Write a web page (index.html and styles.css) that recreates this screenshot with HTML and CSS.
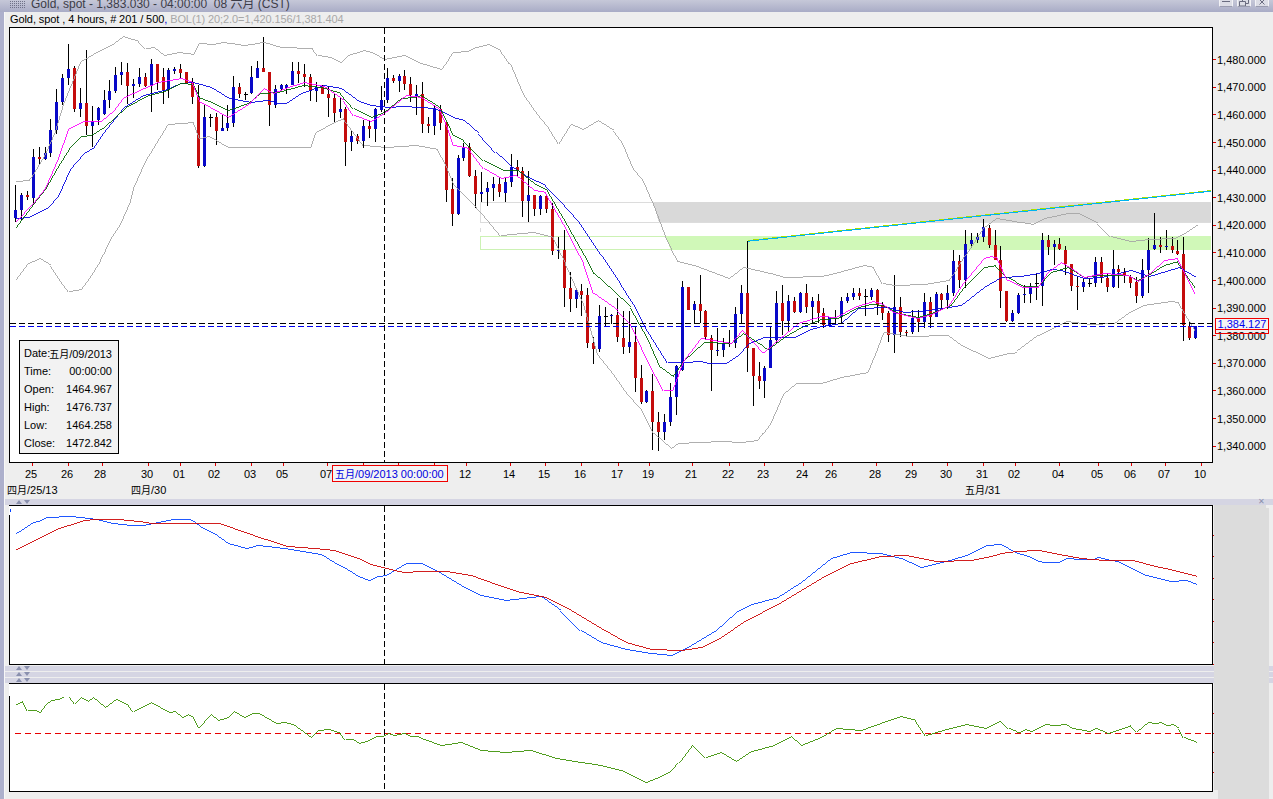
FILE: index.html
```html
<!DOCTYPE html>
<html lang="zh">
<head>
<meta charset="utf-8">
<title>Gold, spot</title>
<link rel="stylesheet" href="styles.css">
</head>
<body>
<div class="window">
  <header class="titlebar">
    <svg class="appicon" width="16" height="8" viewBox="0 0 16 8"><path class="appdots" d="M0 1.5H16M0 3.5H16M0 5.5H16M0 7.5H16"/></svg>
    <span class="titletext">Gold, spot - 1,383.030 - 04:00:00&nbsp; 08 六月 (CST)</span>
    <div class="winbtns">
      <span class="winbtn"><svg width="14" height="7" viewBox="0 0 14 7"><path class="winglyph" d="M3 2.5H11"/></svg></span>
      <span class="winbtn"><svg width="14" height="7" viewBox="0 0 14 7"><path class="winglyph" d="M5.5 2.5V0.5H11.5V4.5H9M2.5 2.5H8.5V7H2.5Z"/></svg></span>
      <span class="winbtn"><svg width="14" height="7" viewBox="0 0 14 7"><path class="winglyph" d="M3 0L8 5M3 5L8 0" transform="translate(1.5 0.5)"/></svg></span>
    </div>
  </header>
  <div class="main">
    <div class="edge"></div>
    <div class="content">
      <div class="legend"><span>Gold, spot , 4 hours, # 201 / 500</span><span class="legendcomma">,</span><span class="legendbol">&nbsp;BOL(1) 20;2.0=1,420.156/1,381.404</span></div>
      <div class="chartrow">
        <div class="plotwrap">
          <svg class="plot" width="1204" height="436" viewBox="9 27 1204 436">
            <rect class="bg" x="9.5" y="27.5" width="1203" height="435"/>
            <polygon class="bandgray" points="653,202 1211,202 1211,223 659,223"/>
            <polygon class="bandgreen" points="665,236 1211,236 1211,250 671,250"/>
            <path class="outlinegray" d="M653 202.5H480.5V222.5H1211M480.5 228V232"/>
            <path class="outlinegreen" d="M665 236.5H480.5V249.5H671"/>
            <path class="wicks" d="M15.5 185V222M21.5 193V220M27.5 191V200M33.5 149V205M39.5 147V164M45.5 147V160M50.5 119V157M56.5 89V134M62.5 74V105M68.5 44V85M74.5 66V112M80.5 88V117M86.5 50V135M92.5 106V147M98.5 107V125M104.5 90V115M109.5 80V108M115.5 67V93M121.5 62V85M127.5 63V104M133.5 79V98M139.5 68V87M145.5 73V87M151.5 59V112M157.5 64V90M163.5 68V104M168.5 68V98M174.5 67V74M180.5 64V78M186.5 72V83M192.5 78V104M198.5 85V168M204.5 105V167M210.5 114V127M216.5 113V145M222.5 115V130M227.5 105V131M233.5 76V127M239.5 83V98M245.5 92V100M251.5 66V94M257.5 61V78M263.5 37V72M269.5 72V126M275.5 85V108M281.5 84V90M286.5 84V94M292.5 62V85M298.5 62V83M304.5 64V87M310.5 74V101M316.5 82V102M322.5 85V94M328.5 86V117M334.5 94V122M340.5 98V118M345.5 107V166M351.5 131V151M357.5 134V144M363.5 120V148M369.5 121V138M375.5 108V142M381.5 86V112M387.5 68V103M393.5 75V83M399.5 74V92M404.5 70V90M410.5 77V102M416.5 85V115M422.5 82V133M428.5 117V133M434.5 105V135M440.5 105V130M446.5 122V202M452.5 178V226M458.5 155V215M463.5 143V161M469.5 143V177M475.5 170V208M481.5 172V202M487.5 182V206M493.5 177V201M499.5 177V197M505.5 178V202M511.5 154V187M517.5 160V176M522.5 167V217M528.5 171V222M534.5 195V216M540.5 195V215M546.5 195V213M552.5 203V255M558.5 237V259M564.5 230V307M570.5 272V312M576.5 288V308M581.5 284V316M587.5 288V348M593.5 337V364M599.5 305V352M605.5 307V327M611.5 314V324M617.5 298V342M623.5 311V354M629.5 311V353M635.5 327V392M641.5 365V404M646.5 390V403M652.5 374V450M658.5 412V451M664.5 414V440M670.5 383V426M676.5 365V415M682.5 281V371M688.5 287V310M694.5 301V323M700.5 275V323M705.5 310V340M711.5 335V391M717.5 328V356M723.5 338V357M729.5 330V347M735.5 307V348M741.5 285V323M747.5 241V372M753.5 348V406M759.5 362V389M764.5 366V398M770.5 326V368M776.5 291V343M782.5 285V335M788.5 295V331M794.5 297V313M800.5 292V313M806.5 284V313M812.5 297V323M818.5 294V323M823.5 308V328M829.5 317V327M835.5 310V325M841.5 297V323M847.5 293V303M853.5 288V300M859.5 288V300M865.5 289V316M871.5 288V300M877.5 289V315M882.5 302V320M888.5 311V342M894.5 275V353M900.5 297V337M906.5 330V336M912.5 310V334M918.5 310V332M924.5 293V328M930.5 297V328M936.5 292V317M941.5 293V310M947.5 285V309M953.5 250V296M959.5 255V288M965.5 230V288M971.5 233V248M977.5 233V243M983.5 219V242M989.5 225V248M995.5 230V260M1000.5 246V308M1006.5 291V322M1012.5 310V322M1018.5 293V314M1024.5 285V303M1030.5 283V303M1036.5 273V300M1042.5 233V306M1048.5 235V255M1054.5 240V265M1059.5 238V250M1065.5 246V275M1071.5 264V291M1077.5 276V310M1083.5 278V292M1089.5 278V287M1095.5 257V287M1101.5 257V283M1107.5 273V292M1113.5 250V288M1118.5 265V288M1124.5 268V283M1130.5 275V288M1136.5 277V303M1142.5 259V298M1148.5 238V293M1154.5 213V250M1160.5 237V253M1166.5 230V250M1172.5 237V253M1177.5 240V255M1183.5 237V341M1189.5 322V340M1195.5 326V339"/>
            <path class="doji" d="M208.5 117.5h4M243.5 94.5h4M727.5 343.5h4M603.5 316.5h4M863.5 296.5h4M1034.5 283.5h4M1087.5 283.5h4"/>
            <path class="bodyblue" d="M15.5 210V218M21.5 195V210M33.5 157V198M45.5 153V159M50.5 130V153M56.5 102V130M62.5 78V102M68.5 69V78M80.5 103V109M92.5 121V126M98.5 108V120M104.5 100V114M109.5 91V100M115.5 75V91M121.5 72V75M133.5 84V86M139.5 77V84M151.5 64V86M168.5 70V90M174.5 69V71M204.5 117V166M222.5 128V131M227.5 123V128M233.5 87V123M251.5 77V93M257.5 68V78M275.5 89V105M281.5 85V89M286.5 85V88M292.5 71V85M316.5 87V91M340.5 109V112M351.5 136V142M363.5 126V141M375.5 109V129M381.5 100V110M387.5 78V100M399.5 76V81M416.5 94V96M434.5 109V126M458.5 158V214M463.5 147V158M481.5 192V194M487.5 188V192M493.5 184V188M505.5 182V193M511.5 167V182M528.5 195V201M540.5 196V209M558.5 250V251M576.5 290V299M599.5 316V349M611.5 315V316M629.5 342V347M646.5 391V402M664.5 422V432M670.5 397V422M676.5 366V397M682.5 287V370M694.5 304V310M717.5 350V351M723.5 343V350M735.5 314V343M741.5 293V314M764.5 368V381M770.5 340V368M776.5 303V340M788.5 301V321M800.5 293V312M812.5 301V307M829.5 317V326M835.5 318V319M841.5 301V317M847.5 297V301M853.5 293V297M871.5 290V297M894.5 307V335M912.5 318V332M924.5 302V322M936.5 294V317M947.5 293V300M953.5 261V293M965.5 244V280M971.5 240V244M977.5 237V240M983.5 227V237M1012.5 313V321M1018.5 295V313M1024.5 294V295M1030.5 286V294M1042.5 240V286M1054.5 244V247M1083.5 282V287M1095.5 262V283M1113.5 269V287M1142.5 270V296M1148.5 250V270M1154.5 245V249M1166.5 246V247M1195.5 326V338"/>
            <path class="bodyred" d="M27.5 195V197M39.5 157V159M74.5 68V109M86.5 103V126M127.5 72V86M145.5 77V86M157.5 64V82M163.5 77V90M180.5 69V73M186.5 72V83M192.5 82V97M198.5 97V166M216.5 117V131M239.5 87V94M263.5 68V72M269.5 72V105M298.5 71V74M304.5 74V77M310.5 77V91M322.5 87V94M328.5 94V98M334.5 98V113M345.5 109V142M357.5 136V141M369.5 126V129M393.5 78V81M404.5 76V84M410.5 84V95M422.5 94V124M428.5 124V126M440.5 109V123M446.5 122V190M452.5 189V214M469.5 147V176M475.5 176V194M499.5 184V192M517.5 167V171M522.5 171V201M534.5 195V209M546.5 196V209M552.5 209V251M564.5 250V288M570.5 288V299M581.5 291V295M587.5 295V343M593.5 343V349M617.5 315V337M623.5 338V347M635.5 342V378M641.5 378V402M652.5 391V422M658.5 422V432M688.5 287V310M700.5 304V311M705.5 311V337M711.5 338V350M747.5 293V348M753.5 348V376M759.5 376V381M782.5 303V321M794.5 301V312M806.5 293V307M818.5 301V313M823.5 313V325M859.5 293V296M877.5 290V305M882.5 305V313M888.5 313V335M900.5 307V332M906.5 332V333M918.5 318V322M930.5 302V317M941.5 294V300M959.5 261V280M989.5 228V245M995.5 245V260M1000.5 260V291M1006.5 291V321M1048.5 240V247M1059.5 244V249M1065.5 250V264M1071.5 264V286M1077.5 286V287M1101.5 262V277M1107.5 278V287M1118.5 269V272M1124.5 272V275M1130.5 277V283M1136.5 282V296M1160.5 245V247M1172.5 246V250M1177.5 251V254M1183.5 254V325M1189.5 326V338"/>
            <polyline class="bb" points="15,181 28,180 33,173 45,153 55,130 63,103 80,61 87,57 97,51 110,45 122,36 138,41 145,48 153,47 163,55 178,52 193,54 198,43 212,44 222,42 230,43 243,45 263,42 280,47 312,48 317,55 330,57 340,62 347,55 363,50 373,53 383,59 403,55 420,63 440,69 445,63 452,52 466,51 475,47 487,44 500,50 512,67 523,93 537,113 547,125 558,143 570,124 582,129 597,120 613,130 622,142 633,168 642,178 653,203 665,235 677,261 693,265 728,278 742,267 770,273 783,277 820,276 830,274 863,265 873,267 882,283 893,285 923,284 948,280 957,267 970,247 983,227 995,218 1020,222 1032,224 1043,218 1067,213 1078,213 1097,223 1110,236 1130,241 1148,239 1173,238 1185,232 1197,224"/>
            <polyline class="bb" points="15,279 27,263 39,258 50,265 62,283 68,291 80,289 87,280 100,260 110,238 120,223 130,200 133,187 145,160 167,124 193,122 199,138 208,136 227,147 310,147 315,132 333,122 343,118 363,145 385,147 415,145 437,149 445,163 453,183 470,200 482,213 500,235 533,232 553,237 565,263 583,303 597,353 613,373 627,393 640,407 653,433 670,448 677,443 720,441 740,442 757,440 770,423 783,393 795,383 820,383 840,377 867,372 875,353 883,332 907,336 947,335 960,345 988,358 1007,353 1013,353 1037,335 1065,321 1090,324 1113,323 1127,313 1142,305 1170,301 1178,302 1195,330"/>
            <polyline class="mablue" points="15,218 28,217 47,207 58,195 70,168 83,153 93,147 103,132 123,107 142,95 163,90 180,83 192,82 210,87 228,98 250,102 267,100 277,103 285,103 300,93 323,85 340,88 358,101 370,105 388,107 400,106 420,107 433,108 443,112 452,117 463,120 478,133 495,152 512,167 527,177 545,185 560,200 578,220 600,253 620,283 633,303 647,330 667,362 683,362 700,361 707,363 725,363 737,355 748,343 763,337 793,337 807,330 820,326 840,323 857,308 887,307 903,312 927,310 960,305 983,287 1000,277 1020,276 1037,273 1050,269 1060,270 1083,278 1100,277 1130,270 1148,276 1178,267 1195,277"/>
            <polyline class="magreen" points="15,227 33,203 45,188 57,167 70,146 80,136 90,135 103,127 125,107 147,95 163,91 180,83 193,84 200,98 213,103 227,110 247,103 260,93 277,92 302,85 320,87 340,93 353,108 370,117 383,112 400,98 413,97 420,95 440,108 448,123 453,135 463,140 483,160 503,170 517,170 533,183 547,190 563,217 580,247 593,273 612,290 630,307 647,337 660,367 672,376 683,360 703,342 730,343 742,333 753,340 767,349 783,337 800,327 820,319 837,318 857,307 870,304 882,305 897,313 917,317 930,313 950,305 963,287 983,267 995,265 1007,277 1023,286 1037,286 1050,272 1067,267 1083,277 1097,275 1127,275 1137,280 1150,273 1163,265 1177,261 1195,287"/>
            <polyline class="mamagenta" points="15,221 33,202 45,187 58,157 68,128 83,121 100,121 113,110 123,97 143,88 157,82 180,78 192,82 200,102 227,117 250,102 263,88 272,93 287,87 303,82 323,86 343,100 353,115 370,121 383,113 405,95 420,97 440,110 447,127 453,145 468,148 483,168 500,178 515,175 533,190 545,192 563,223 583,263 593,293 617,310 630,323 647,360 663,390 672,390 683,360 700,338 730,343 742,329 763,352 773,343 797,323 820,316 835,317 853,307 872,301 882,304 892,312 917,318 933,313 948,305 963,282 983,258 990,256 997,258 1007,280 1023,287 1037,287 1047,272 1060,262 1070,268 1083,277 1103,273 1127,275 1137,281 1150,272 1163,260 1177,258 1195,293"/>
            <path class="trendlime" d="M748 240.6L1211 190.6"/>
            <path class="trendcyan" d="M748 241.2L1211 191.2"/>
            <path class="dashblack" d="M10 323.5H1212"/>
            <path class="dashblue" d="M10 326.5H1212"/>
            <path class="dashblack" d="M384.5 28V462"/>
          </svg>
          <dl class="info">
            <dt>Date:</dt><dd><span class="cjk">五月</span>/09/2013</dd>
            <dt>Time:</dt><dd>00:00:00</dd>
            <dt>Open:</dt><dd>1464.967</dd>
            <dt>High:</dt><dd>1476.737</dd>
            <dt>Low:</dt><dd>1464.258</dd>
            <dt>Close:</dt><dd>1472.842</dd>
          </dl>
        </div>
        <div class="yaxis">
          <div class="ylabel">1,480.000</div>
          <div class="ylabel">1,470.000</div>
          <div class="ylabel">1,460.000</div>
          <div class="ylabel">1,450.000</div>
          <div class="ylabel">1,440.000</div>
          <div class="ylabel">1,430.000</div>
          <div class="ylabel">1,420.000</div>
          <div class="ylabel">1,410.000</div>
          <div class="ylabel">1,400.000</div>
          <div class="ylabel">1,390.000</div>
          <div class="ylabel">1,380.000</div>
          <div class="ylabel">1,370.000</div>
          <div class="ylabel">1,360.000</div>
          <div class="ylabel">1,350.000</div>
          <div class="ylabel">1,340.000</div>
          <div class="pricetag">1,384.127</div>
        </div>
      </div>
      <svg class="xaxis" width="1204" height="36" viewBox="9 463 1204 36">
        <path class="xticks" d="M32.5 463V466M68.5 463V466M102.5 463V466M148.5 463V466M180.5 463V466M215.5 463V466M251.5 463V466M283.5 463V466M327.5 463V466M363.5 463V466M398.5 463V466M434.5 463V466M466.5 463V466M510.5 463V466M545.5 463V466M581.5 463V466M618.5 463V466M649.5 463V466M692.5 463V466M729.5 463V466M764.5 463V466M803.5 463V466M832.5 463V466M876.5 463V466M912.5 463V466M947.5 463V466M983.5 463V466M1015.5 463V466M1059.5 463V466M1098.5 463V466M1131.5 463V466M1165.5 463V466M1201.5 463V466"/>
        <g class="xlabels">
          <text x="31" y="478">25</text><text x="67" y="478">26</text><text x="100" y="478">28</text><text x="147" y="478">30</text><text x="179" y="478">01</text><text x="214" y="478">02</text><text x="250" y="478">03</text><text x="282" y="478">05</text><text x="326" y="478">07</text><text x="465" y="478">12</text><text x="509" y="478">14</text><text x="544" y="478">15</text><text x="580" y="478">16</text><text x="617" y="478">17</text><text x="648" y="478">19</text><text x="691" y="478">21</text><text x="728" y="478">22</text><text x="763" y="478">23</text><text x="802" y="478">24</text><text x="831" y="478">26</text><text x="875" y="478">28</text><text x="911" y="478">29</text><text x="946" y="478">30</text><text x="982" y="478">31</text><text x="1014" y="478">02</text><text x="1058" y="478">04</text><text x="1097" y="478">05</text><text x="1130" y="478">06</text><text x="1164" y="478">07</text><text x="1200" y="478">10</text>
        </g>
        <rect class="cursorbox" x="332.5" y="465.5" width="115" height="16"/>
        <text class="cursortext" x="335" y="478"><tspan class="cjk">五月</tspan>/09/2013 00:00:00</text>
        <g class="xdates">
          <text x="7" y="494"><tspan class="cjk">四月</tspan>/25/13</text><text x="131" y="494"><tspan class="cjk">四月</tspan>/30</text><text x="965" y="494"><tspan class="cjk">五月</tspan>/31</text>
        </g>
      </svg>
      <div class="sash"><i class="tri up"></i><i class="tri down"></i></div>
      <svg class="plot" width="1205" height="160" viewBox="9 505 1205 160">
        <rect class="bg" x="9.5" y="505.5" width="1203" height="159"/>
        <path class="gapwhite" d="M9.5 506V515"/>
        <path class="markblue" d="M10.5 509V512"/>
        <path class="rticks" d="M1213 535.5h1M1213 556.5h1M1213 578.5h1M1213 599.5h1M1213 621.5h1M1213 642.5h1M1213 664.5h1"/>
        <polyline class="sigblue" points="15,533 23,528 32,522 40,520 45,517 70,516 88,518 100,520 112,523 130,525 142,525 157,522 172,519 188,519 193,521 200,527 213,533 227,543 245,548 257,545 283,548 320,554 333,562 343,567 357,576 368,580 377,576 385,575 405,563 420,563 435,570 460,585 480,595 505,600 540,596 560,610 580,630 600,642 625,649 650,653 670,655 690,645 715,630 735,612 750,604 775,598 800,582 830,558 850,552 880,553 900,558 920,567 945,561 965,555 985,545 1000,544 1012,551 1028,556 1037,561 1045,562 1057,562 1065,558 1080,559 1092,559 1097,557 1110,560 1117,561 1127,566 1142,574 1153,577 1170,581 1185,580 1196,584"/>
        <polyline class="sigred" points="15,549 33,540 55,529 83,520 93,519 117,519 138,521 150,523 207,523 218,523 247,533 287,546 313,548 333,550 360,559 370,564 393,570 403,572 420,571 445,571 470,575 495,584 520,592 545,597 570,610 600,628 625,642 650,649 680,650 700,647 720,637 745,620 775,605 800,590 825,575 850,563 880,556 905,555 935,561 970,560 990,556 1000,553 1015,551 1038,550 1058,554 1080,558 1103,560 1132,560 1150,565 1173,570 1196,576"/>
        <path class="dashblack" d="M384.5 506V664"/>
      </svg>
      <div class="sashes">
        <div class="sash thin"><i class="tri up"></i><i class="tri down"></i></div>
        <div class="sash thin"><i class="tri up"></i><i class="tri down"></i></div>
        <div class="sash thin"><i class="tri up"></i><i class="tri down"></i></div>
      </div>
      <svg class="plot" width="1205" height="109" viewBox="9 683 1205 109">
        <rect class="bg" x="9.5" y="683.5" width="1203" height="108"/>
        <path class="gapwhite" d="M9.5 684V696"/>
        <path class="rticks" d="M1213 713.5h1M1213 733.5h1M1213 752.5h1M1213 772.5h1"/>
        <path class="dashred" d="M15 733.5H1212"/>
        <polyline class="rsi" points="15,704 22,701 27,710 35,710 39,712 45,704 50,700 57,699 63,696"/>
        <polyline class="rsi" points="69,696 74,703 80,697 87,701 92,697 104,707 115,699 128,705 133,711 150,702 168,712 174,711 181,717 187,714 193,717 198,727 210,714 217,720 227,717 233,711 243,717 252,713 258,713 275,723 283,722 292,724 310,737 317,730 328,729 340,733 345,739 352,739 358,743 365,741 375,736 382,736 387,733 393,735 403,733 410,736 417,736 420,738 440,745 460,742 480,750 505,752 530,750 555,758 580,762 600,765 620,770 645,782 655,778 670,771 680,760 692,744 705,757 720,752 735,761 750,751 770,746 790,736 800,745 820,737 835,728 860,730 885,721 900,716 915,720 925,735 945,729 965,724 985,728 1000,720 1008,728 1018,732 1024,729 1030,731 1045,724 1053,725 1065,724 1071,728 1078,729 1088,731 1095,728 1107,733 1122,728 1130,725 1136,731 1147,722 1155,723 1159,722 1166,725 1172,724 1178,728 1183,737 1196,742"/>
        <path class="dashblack" d="M384.5 684V791"/>
      </svg>
    </div>
    <div class="rail"></div>
    <span class="sashclose">✕</span>
  </div>
</div>
</body>
</html>
```
FILE: styles.css
```css
* { box-sizing: border-box; }
html, body { margin: 0; padding: 0; }
body { font-family: "Liberation Sans", "Noto Sans CJK SC", sans-serif; font-size: 11px; color: #000; background: #eee; }
.window { width: 1273px; height: 799px; overflow: hidden; display: flex; flex-direction: column; background: #eee; position: relative; }
.cjk { font-size: 10px; }

.titlebar { height: 12px; flex: none; display: flex; align-items: flex-start; padding-left: 10px; background: linear-gradient(#c6c8d8, #a9acc6); overflow: hidden; }
.appicon { flex: none; }
.appdots { stroke: #6f7288; stroke-width: 1; stroke-dasharray: 1 1; fill: none; }
.titletext { margin-left: 5px; font-size: 12px; line-height: 8px; color: #3c3c48; white-space: nowrap; flex: 1; }
.winbtns { display: flex; gap: 4px; padding-right: 4px; flex: none; }
.winbtn { width: 14px; height: 7px; background: #dcdde6; border: 1px solid #f2f2f6; border-top: 0; border-bottom-color: #9a9cb0; display: block; overflow: hidden; }
.winbtn svg { display: block; margin: -1px; }
.winglyph { stroke: #6a6c80; stroke-width: 1; fill: none; }

.main { flex: 1; display: flex; min-height: 0; position: relative; }
.edge { width: 5px; flex: none; background: #adb0cc; border-right: 1px solid #f7f7f7; }
.content { flex: 1; display: flex; flex-direction: column; min-width: 0; }
.legend { height: 15px; flex: none; padding-left: 5px; line-height: 15px; white-space: nowrap; font-size: 11px; letter-spacing: -0.09px; display: flex; }
.legendcomma { color: #0000d0; }
.legendbol { color: #a8a8a8; }

.chartrow { display: flex; height: 436px; flex: none; }
.plotwrap { position: relative; width: 1204px; flex: none; margin-left: 4px; }
.plot { display: block; flex: none; margin-left: 4px; shape-rendering: crispEdges; }
.plotwrap .plot { margin-left: 0; }
.bg { fill: #fff; stroke: #000; stroke-width: 1; }
.bandgray { fill: #d9d9d9; }
.bandgreen { fill: #d0f8b8; }
.outlinegray { fill: none; stroke: #dcdcdc; stroke-width: 1; }
.outlinegreen { fill: none; stroke: #ccf2b4; stroke-width: 1; }
.wicks, .doji { fill: none; stroke: #000; stroke-width: 1; }
.bodyblue { fill: none; stroke: #0808c8; stroke-width: 3; }
.bodyred { fill: none; stroke: #c40c0c; stroke-width: 3; }
.bb, .mablue, .magreen, .mamagenta, .sigblue, .sigred, .rsi { fill: none; stroke-width: 0.88; transform: translate(0.5px, 0.5px); }
.bb { stroke: #a4a4a4; }
.mablue { stroke: #0000e0; }
.magreen { stroke: #006400; }
.mamagenta { stroke: #ff00ff; }
.sigblue { stroke: #0040ff; }
.sigred { stroke: #cc0000; }
.rsi { stroke: #389000; }
.trendlime { fill: none; stroke: #a8e000; stroke-width: 1; }
.trendcyan { fill: none; stroke: #00b4f0; stroke-width: 1; }
.dashblack { fill: none; stroke: #000; stroke-width: 1; stroke-dasharray: 6 3; }
.dashblue { fill: none; stroke: #0000f0; stroke-width: 1; stroke-dasharray: 6 3; }
.dashred { fill: none; stroke: #e80000; stroke-width: 1; stroke-dasharray: 6 4; }
.gapwhite { fill: none; stroke: #fff; stroke-width: 1; }
.markblue { fill: none; stroke: #0040ff; stroke-width: 1; }
.rticks { fill: none; stroke: #e00000; stroke-width: 1; }

.info { position: absolute; left: 10px; top: 313px; width: 100px; height: 114px; margin: 0; padding: 3px 6px 3px 4px; border: 1px solid #000; background: #f2f2f2; display: grid; grid-template-columns: 25px minmax(0, 1fr); grid-auto-rows: 18px; align-items: center; font-size: 11px; }
.info dt { margin: 0; }
.info dd { margin: 0; justify-self: end; white-space: nowrap; }

.yaxis { position: relative; flex: 1; padding-top: 19px; display: flex; flex-direction: column; }
.ylabel { height: 27.6px; flex: none; display: flex; align-items: center; gap: 1px; font-size: 11px; white-space: nowrap; }
.ylabel::before { content: ""; width: 3px; height: 1px; background: #e00000; flex: none; }
.pricetag { position: absolute; left: 2px; top: 291px; width: 54px; height: 12px; border: 1px solid #f00000; background: #f4f4f4; color: #0000f0; font-size: 11px; line-height: 10px; text-align: center; }
.pricetag::after { content: ""; position: absolute; left: -1px; right: -1px; top: 100%; height: 4px; border: 1px solid #f00000; border-top: 0; }

.xaxis { display: block; flex: none; margin-left: 4px; overflow: visible; }
.xticks { fill: none; stroke: #e00000; stroke-width: 1; shape-rendering: crispEdges; }
.xlabels { font-size: 11px; text-anchor: middle; }
.xdates { font-size: 11px; }
.cursorbox { fill: #f4f4f4; stroke: #f00000; stroke-width: 1; shape-rendering: crispEdges; }
.cursortext { font-size: 11px; fill: #0000e0; }

.sash { height: 6px; flex: none; background: #d5d5e3; display: flex; gap: 2px; padding: 1px 0 0 11px; align-items: flex-start; }
.sash.thin { height: 5px; padding-top: 0; }
.sashes { height: 18px; flex: none; padding-top: 1px; display: flex; flex-direction: column; gap: 1px; }
.tri { display: block; width: 0; height: 0; border-left: 3.5px solid transparent; border-right: 3.5px solid transparent; }
.tri.up { border-bottom: 4px solid #8a90ae; }
.tri.down { border-top: 4px solid #8a90ae; }

.rail { position: absolute; left: 1214px; right: 4px; top: 493px; bottom: 0; background: #dcdcdc; clip-path: polygon(0 0, 52px 0, 52px 3px, 55px 3px, 55px 100%, 4px 100%, 4px 285px, 0 285px); }
.sashclose { position: absolute; left: 1258px; top: 486px; font-size: 8px; line-height: 8px; color: #8a90ae; }
```
